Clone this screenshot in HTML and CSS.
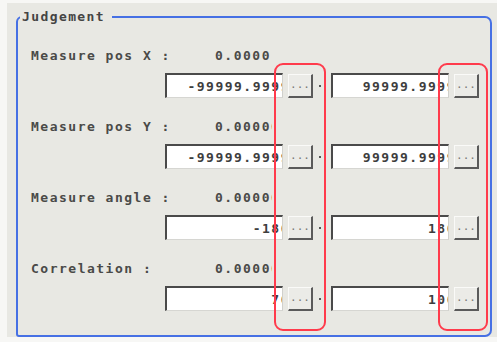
FILE: index.html
```html
<!DOCTYPE html>
<html lang="en">
<head>
    <meta charset="UTF-8">
    <title>Judgement</title>
    <link rel="stylesheet" href="styles.css">
</head>
<body>
    <div class="screen">
        <fieldset class="group">
            <legend>Judgement</legend>

            <!-- Measure pos X -->
            <div class="item">
                <div class="caption">
                    <span class="name">Measure pos X :</span>
                    <span class="value">0.0000</span>
                </div>
                <div class="range">
                    <div class="box"><span>-99999.9999</span></div>
                    <button class="dots">...</button>
                    <i class="sep"></i>
                    <div class="box"><span>99999.9999</span></div>
                    <button class="dots">...</button>
                </div>
            </div>

            <!-- Measure pos Y -->
            <div class="item">
                <div class="caption">
                    <span class="name">Measure pos Y :</span>
                    <span class="value">0.00000</span>
                </div>
                <div class="range">
                    <div class="box"><span>-99999.9999</span></div>
                    <button class="dots">...</button>
                    <i class="sep"></i>
                    <div class="box"><span>99999.9999</span></div>
                    <button class="dots">...</button>
                </div>
            </div>

            <!-- Measure angle -->
            <div class="item">
                <div class="caption">
                    <span class="name">Measure angle :</span>
                    <span class="value">0.00000</span>
                </div>
                <div class="range">
                    <div class="box"><span>-180</span></div>
                    <button class="dots">...</button>
                    <i class="sep"></i>
                    <div class="box"><span>180</span></div>
                    <button class="dots">...</button>
                </div>
            </div>

            <!-- Correlation -->
            <div class="item">
                <div class="caption">
                    <span class="name">Correlation :</span>
                    <span class="value">0.00000</span>
                </div>
                <div class="range">
                    <div class="box"><span>70</span></div>
                    <button class="dots">...</button>
                    <i class="sep"></i>
                    <div class="box"><span>100</span></div>
                    <button class="dots">...</button>
                </div>
            </div>
        </fieldset>

        <!-- highlight marks over the "..." buttons -->
        <div class="mark mark-left"></div>
        <div class="mark mark-right"></div>
    </div>
</body>
</html>
```

FILE: styles.css
```css
body {
    margin: 0;
    background: #f7f7f5;
    font-family: "DejaVu Sans Mono", "Liberation Mono", monospace;
    font-weight: bold;
    font-size: 13px;
    letter-spacing: 1.5px;
    color: #4a4a48;
}
.screen {
    position: relative;
    margin: 3px 0 0 7px;
    height: 334px;
    background: #e8e8e3;
    overflow: hidden;
}
.group {
    box-sizing: border-box;
    width: 476px;
    height: 330px;
    margin: 4px 0 0 9px;
    padding: 0;
    border: 2px solid #4670e4;
    border-radius: 6px 7px 7px 3px;
    min-width: 0;
}
.group legend {
    margin-left: 2px;
    padding: 0 7px 0 2px;
    line-height: 20px;
    letter-spacing: 1.4px;
    color: #444;
}
.item {
    padding-left: 13px;
}
.item:first-of-type {
    padding-top: 20px;
}
.item + .item {
    margin-top: 20px;
}
.caption {
    display: flex;
    height: 18px;
    line-height: 18px;
}
.name {
    width: 184px;
    white-space: nowrap;
}
.value {
    width: 57px;
    overflow: hidden;
    white-space: nowrap;
}
.range {
    display: flex;
    align-items: center;
    margin: 8px 0 0 134px;
    height: 25px;
}
.box {
    box-sizing: border-box;
    display: flex;
    justify-content: flex-end;
    align-items: center;
    width: 118px;
    height: 25px;
    background: #fff;
    border-top: 2px solid #4a4a4a;
    border-left: 2px solid #4a4a4a;
    border-right: 1px solid #d0d0cc;
    border-bottom: 1px solid #d6d6d2;
    overflow: hidden;
    white-space: nowrap;
    color: #3e3e3e;
}
.box span {
    margin-right: -8px;
}
.dots {
    box-sizing: border-box;
    width: 25px;
    height: 24px;
    margin-left: 5px;
    padding: 0 0 2px;
    background: #ebebe7;
    border-top: 1px solid #fafaf8;
    border-left: 1px solid #fafaf8;
    border-right: 2px solid #5a5a5a;
    border-bottom: 2px solid #5a5a5a;
    font-family: "DejaVu Sans Mono", monospace;
    font-size: 11px;
    letter-spacing: 0;
    color: #7a7a78;
}
.sep {
    width: 2px;
    height: 2px;
    margin: 0 10px 0 6px;
    background: #555;
}
.mark {
    position: absolute;
    top: 60px;
    width: 48px;
    height: 264px;
    border: 2px solid #ff3b4c;
    border-radius: 9px;
}
.mark-left {
    left: 267px;
}
.mark-right {
    left: 431px;
    width: 46px;
}
```
